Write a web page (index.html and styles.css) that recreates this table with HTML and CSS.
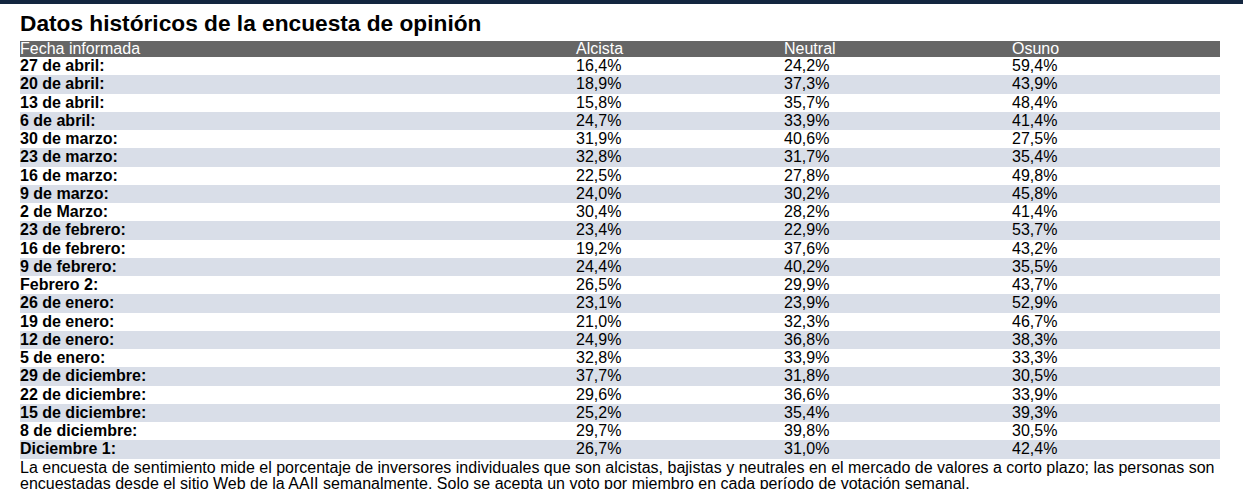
FILE: index.html
```html
<!DOCTYPE html>
<html lang="es">
<head>
<meta charset="utf-8">
<title>Datos históricos de la encuesta de opinión</title>
<link rel="stylesheet" href="styles.css">
</head>
<body>
<div class="topbar"></div>
<main class="content">
<h2 class="title">Datos históricos de la encuesta de opinión</h2>
<table class="survey">
<colgroup><col class="c1"><col class="c2"><col class="c3"><col class="c4"></colgroup>
<thead>
<tr><th>Fecha informada</th><th>Alcista</th><th>Neutral</th><th>Osuno</th></tr>
</thead>
<tbody>
<tr><td class="date">27 de abril:</td><td>16,4%</td><td>24,2%</td><td>59,4%</td></tr>
<tr class="alt"><td class="date">20 de abril:</td><td>18,9%</td><td>37,3%</td><td>43,9%</td></tr>
<tr><td class="date">13 de abril:</td><td>15,8%</td><td>35,7%</td><td>48,4%</td></tr>
<tr class="alt"><td class="date">6 de abril:</td><td>24,7%</td><td>33,9%</td><td>41,4%</td></tr>
<tr><td class="date">30 de marzo:</td><td>31,9%</td><td>40,6%</td><td>27,5%</td></tr>
<tr class="alt"><td class="date">23 de marzo:</td><td>32,8%</td><td>31,7%</td><td>35,4%</td></tr>
<tr><td class="date">16 de marzo:</td><td>22,5%</td><td>27,8%</td><td>49,8%</td></tr>
<tr class="alt"><td class="date">9 de marzo:</td><td>24,0%</td><td>30,2%</td><td>45,8%</td></tr>
<tr><td class="date">2 de Marzo:</td><td>30,4%</td><td>28,2%</td><td>41,4%</td></tr>
<tr class="alt"><td class="date">23 de febrero:</td><td>23,4%</td><td>22,9%</td><td>53,7%</td></tr>
<tr><td class="date">16 de febrero:</td><td>19,2%</td><td>37,6%</td><td>43,2%</td></tr>
<tr class="alt"><td class="date">9 de febrero:</td><td>24,4%</td><td>40,2%</td><td>35,5%</td></tr>
<tr><td class="date">Febrero 2:</td><td>26,5%</td><td>29,9%</td><td>43,7%</td></tr>
<tr class="alt"><td class="date">26 de enero:</td><td>23,1%</td><td>23,9%</td><td>52,9%</td></tr>
<tr><td class="date">19 de enero:</td><td>21,0%</td><td>32,3%</td><td>46,7%</td></tr>
<tr class="alt"><td class="date">12 de enero:</td><td>24,9%</td><td>36,8%</td><td>38,3%</td></tr>
<tr><td class="date">5 de enero:</td><td>32,8%</td><td>33,9%</td><td>33,3%</td></tr>
<tr class="alt"><td class="date">29 de diciembre:</td><td>37,7%</td><td>31,8%</td><td>30,5%</td></tr>
<tr><td class="date">22 de diciembre:</td><td>29,6%</td><td>36,6%</td><td>33,9%</td></tr>
<tr class="alt"><td class="date">15 de diciembre:</td><td>25,2%</td><td>35,4%</td><td>39,3%</td></tr>
<tr><td class="date">8 de diciembre:</td><td>29,7%</td><td>39,8%</td><td>30,5%</td></tr>
<tr class="alt"><td class="date">Diciembre 1:</td><td>26,7%</td><td>31,0%</td><td>42,4%</td></tr>
</tbody>
</table>
<p class="note">La encuesta de sentimiento mide el porcentaje de inversores individuales que son alcistas, bajistas y neutrales en el mercado de valores a corto plazo; las personas son encuestadas desde el sitio Web de la AAII semanalmente. Solo se acepta un voto por miembro en cada período de votación semanal.</p>
</main>
</body>
</html>
```
FILE: styles.css
```css
html, body {
  margin: 0;
  padding: 0;
  background: #ffffff;
}
body {
  font-family: "Liberation Sans", Arial, sans-serif;
  color: #000000;
}
.topbar {
  height: 4px;
  background: #13263f;
}
.content {
  padding: 0 23px 0 20px;
}
.title {
  margin: 6px 0 0 0;
  font-size: 22.7px;
  line-height: 26px;
  font-weight: bold;
}
.survey {
  margin-top: 5px;
  width: 1200px;
  border-collapse: collapse;
  border-spacing: 0;
  table-layout: fixed;
  font-size: 16px;
}
.c1 { width: 556px; }
.c2 { width: 208px; }
.c3 { width: 228px; }
.c4 { width: 208px; }
.survey th {
  background: #666666;
  color: #ffffff;
  font-weight: normal;
  text-align: left;
  padding: 0;
  height: 16px;
  line-height: 16px;
}
.survey td {
  padding: 0;
  height: 18.25px;
  line-height: 18.25px;
}
.survey td.date {
  font-weight: bold;
}
.survey tr.alt td {
  background: #d9dee8;
}
.note {
  margin: 1px 0 0 0;
  font-size: 16px;
  line-height: 16.5px;
}
```
